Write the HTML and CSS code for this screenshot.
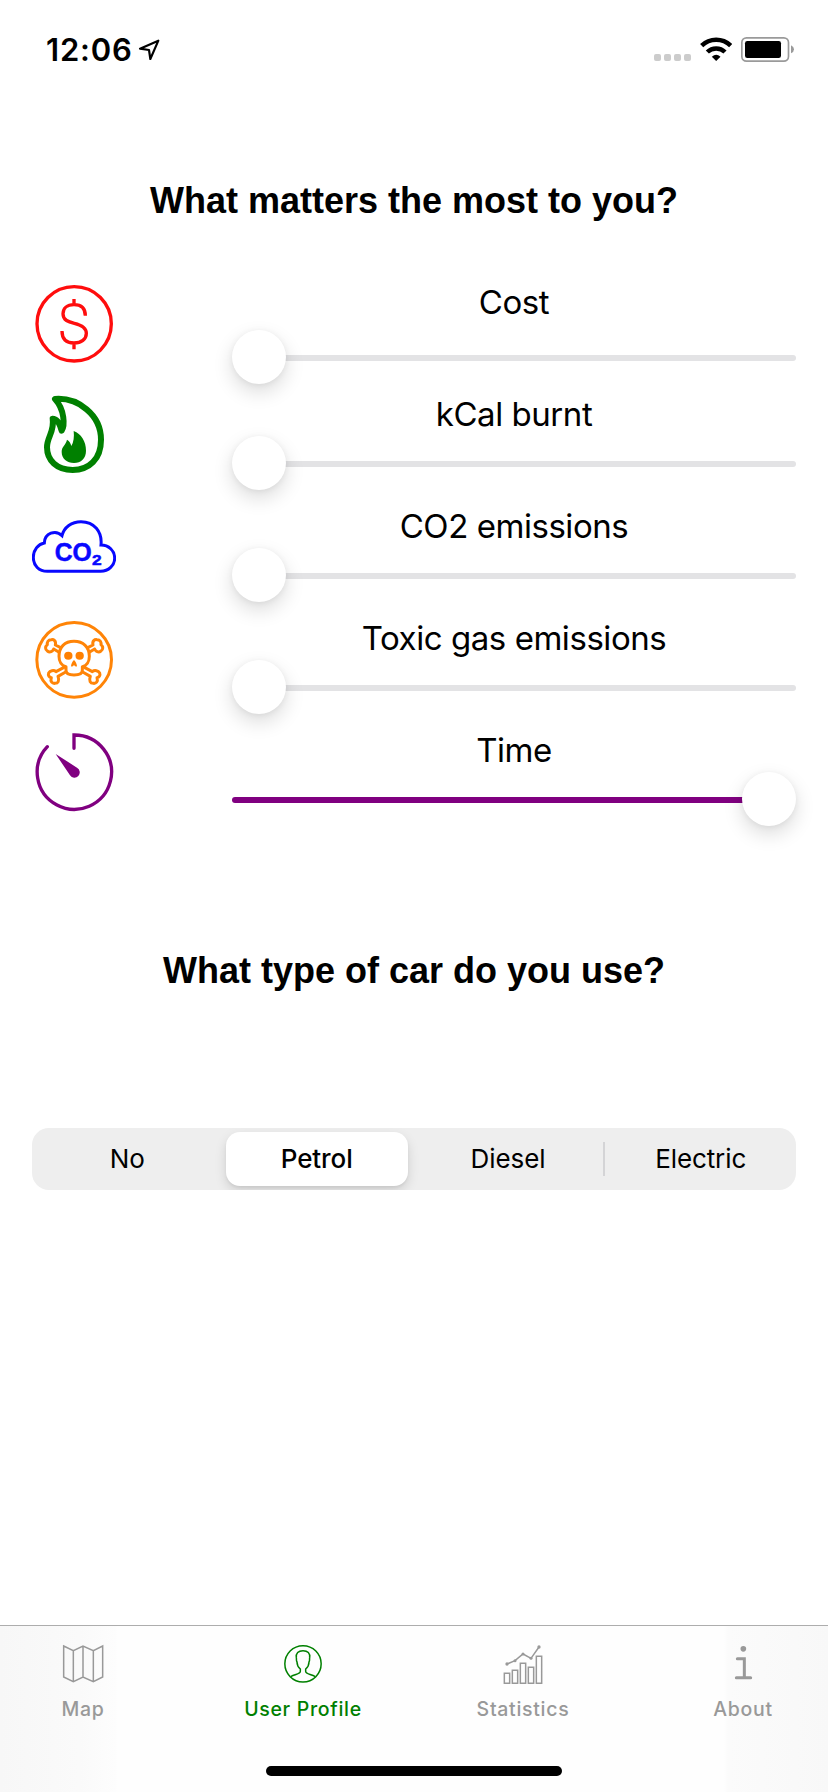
FILE: index.html
```html
<!DOCTYPE html>
<html lang="en">
<head>
<meta charset="utf-8">
<title>User Profile</title>
<link rel="stylesheet" href="styles.css">
</head>
<body>
<div class="screen">
  <header class="status">
    <span class="clock">12:06</span>
    <svg class="location" viewBox="354 54 66 69"><path d="M415 62 L360 86 L387 90 L391 117 Z" fill="none" stroke="#000" stroke-width="6.500" stroke-linejoin="round"/></svg>
    <span class="signal"><i></i><i></i><i></i><i></i></span>
    <svg class="wifi" viewBox="178 51 96 75">
      <g fill="none" stroke="#000" stroke-width="13.500"><path d="M183 77 A62 62 0 0 1 270 77"/><path d="M200 96 A38 38 0 0 1 253 96"/></g>
      <path d="M226.500 123 L213.500 110 Q226.500 98 239.500 110 Z"/>
    </svg>
    <svg class="battery" viewBox="303 51 159 75"><rect x="305.500" y="53.500" width="140" height="70" rx="14" fill="none" stroke="#9a9a9a" stroke-width="5"/><rect x="315" y="63" width="108" height="51" rx="7"/><path d="M453 76 Q462 80 462 88 Q462 96 453 100 Z" fill="#9a9a9a"/></svg>
  </header>

  <main class="content">
    <h1 class="heading">What matters the most to you?</h1>
    <section class="sliders">
      <div class="row row-first">
        <svg class="icon" viewBox="36 36 252 252"><g fill="none" stroke="#ff0d0d" stroke-width="10"><circle cx="162.500" cy="161.500" r="111.500"/><path d="M196 137 C196 114 183 104 162 104 C141 104 129 115 129 131 C129 151 146 156 163 160 C184 165 199 172 199 190 C199 208 184 219 162 219 C139 219 126 207 126 183 M162 87 V105 M162 218 V238"/></g></svg>
        <div class="control"><span class="label">Cost</span><div class="slider"><div class="track"></div><div class="thumb"></div></div></div>
      </div>
      <div class="row">
        <svg class="icon" viewBox="36 372 252 252"><path d="M105 387 C174 382 243 434 243 509 C243 568 207 600 158 600 C110 600 81 571 81 532 C81 500 104 486 98 446 C112 446 119 459 125 482 C135 466 134 419 105 387 Z" fill="none" stroke="#008000" stroke-width="18" stroke-linejoin="round"/><path d="M161 483 C184 492 198 514 198 542 C198 565 183 579 162 579 C141 579 125 566 125 546 C125 529 137 526 141 509 C149 514 152 520 154 528 C161 517 163 500 161 483 Z" fill="#008000"/></svg>
        <div class="control"><span class="label">kCal burnt</span><div class="slider"><div class="track"></div><div class="thumb"></div></div></div>
      </div>
      <div class="row">
        <svg class="icon" viewBox="36 18 252 252"><path d="M82 214 H242 C266 214 284 196 284 175 C284 152 266 135 243 135 C247 94 222 65 183 65 C155 65 132 82 126 107 C107 88 74 99 73 129 C54 132 40 151 40 172 C40 197 57 214 82 214 Z" fill="none" stroke="#0808ff" stroke-width="9"/><text class="gas" x="104" y="183" font-size="76" textLength="111" lengthAdjust="spacingAndGlyphs">CO</text><text class="gas" x="216" y="194" font-size="46" textLength="29" lengthAdjust="spacingAndGlyphs">2</text></svg>
        <div class="control"><span class="label">CO2 emissions</span><div class="slider"><div class="track"></div><div class="thumb"></div></div></div>
      </div>
      <div class="row">
        <svg class="icon" viewBox="36 354 252 252">
          <g fill="none" stroke="#ff8407" stroke-width="9" stroke-linejoin="round" stroke-linecap="round"><circle cx="162.500" cy="479.500" r="112" stroke-width="9"/>
          <path d="M138 500 C125 498 117 485 117 469 C117 441 134 424 162 424 C190 424 208 441 208 469 C208 485 200 498 187 500 V511 C187 521 179 525 162 525 C146 525 138 521 138 511 Z"/>
          <path d="M122 443 L106 435 C109 422 101 418 94 419 C84 419 81 427 82 434 C75 440 75 449 82 453 C90 459 98 454 101 447 L116 456"/>
          <path d="M203 443 L219 435 C216 422 224 418 231 419 C241 419 244 427 243 434 C250 440 250 449 243 453 C235 459 227 454 224 447 L209 456"/>
          <path d="M132 502 L108 515 C101 509 90 512 86 519 C83 527 88 532 94 533 C90 545 97 551 105 550 C114 550 119 543 114 529 L137 516"/>
          <path d="M193 502 L217 515 C224 509 235 512 239 519 C242 527 237 532 231 533 C235 545 228 551 220 550 C211 550 206 543 211 529 L188 516"/></g>
          <g fill="#ff8000"><ellipse cx="145" cy="467" rx="12.500" ry="12"/><ellipse cx="179" cy="467" rx="12.500" ry="12"/><path d="M162 480 C167 484 171 493 171 499 Q166 501 162 495 Q158 501 153 499 C153 493 157 484 162 480 Z"/></g>
        </svg>
        <div class="control"><span class="label">Toxic gas emissions</span><div class="slider"><div class="track"></div><div class="thumb"></div></div></div>
      </div>
      <div class="row">
        <svg class="icon" viewBox="36 690 252 252"><path d="M162 745 V705 A111.500 111.500 0 1 1 82 740" fill="none" stroke="#800080" stroke-width="10" stroke-linecap="round"/><path d="M107 762 L171 803 A16 16 0 1 1 150 826 Z" fill="#800080"/></svg>
        <div class="control"><span class="label">Time</span><div class="slider slider-full"><div class="track"></div><div class="thumb"></div></div></div>
      </div>
    </section>

    <h1 class="heading heading-car">What type of car do you use?</h1>
    <div class="segments">
      <span class="segment">No</span>
      <span class="segment selected">Petrol</span>
      <span class="segment">Diesel</span>
      <span class="divider"></span>
      <span class="segment">Electric</span>
    </div>
  </main>

  <footer class="tabbar">
    <nav class="tabs">
      <div class="tab"><svg class="tab-icon" viewBox="186 102 126 120"><path d="M191 108 L220 122 L249 108 L280 122 L308 108 V201 L280 215 L249 201 L220 215 L191 201 Z M220 122 V215 M249 108 V201 M280 122 V215" fill="none" stroke="#999" stroke-width="4.500"/></svg><span>Map</span></div>
      <div class="tab active"><svg class="tab-icon" viewBox="846 102 126 120"><g fill="none" stroke="#008000" stroke-width="4.500"><circle cx="909" cy="161.500" r="54.500"/><path d="M872 200 C886 192 901 193 901 184 V177 C894 171 891 162 891 156 C888 151 890 147 889 143 C887 129 895 122 909 122 C923 122 931 129 929 143 C928 147 930 151 927 156 C927 162 924 171 917 177 V184 C917 193 932 192 946 200"/></g></svg><span>User Profile</span></div>
      <div class="tab"><svg class="tab-icon" viewBox="264 102 126 120"><g fill="none" stroke="#999" stroke-width="4.500"><path d="M271 190 H287 V220 H271 Z M295 181 H311 V220 H295 Z M319 160 H335 V220 H319 Z M343 172 H359 V220 H343 Z M367 139 H383 V220 H367 Z M279 162 L303 152 L327 132 L351 145 L375 111"/></g><g fill="#999"><circle cx="279" cy="162" r="5"/><circle cx="303" cy="152" r="4.500"/><circle cx="327" cy="132" r="4.500"/><circle cx="351" cy="145" r="4.500"/><circle cx="375" cy="111" r="5"/></g></svg><span>Statistics</span></div>
      <div class="tab"><svg class="tab-icon" viewBox="924 102 126 120"><circle cx="988" cy="116.500" r="8.500" fill="#999"/><path d="M970 146 H991 V203 M967 203 H1010" fill="none" stroke="#999" stroke-width="9" stroke-linecap="round"/></svg><span>About</span></div>
    </nav>
    <div class="home"></div>
  </footer>
</div>
</body>
</html>
```
FILE: styles.css
```css
body {
  margin: 0;
  background: #fff;
  color: #000;
  font-family: Inter, "Liberation Sans", sans-serif;
}
.screen {
  width: 828px;
  height: 1792px;
  display: flex;
  flex-direction: column;
  overflow: hidden;
}
.status {
  box-sizing: border-box;
  height: 100px;
  padding: 30px 34px 0 46px;
  display: flex;
  align-items: flex-start;
}
.clock {
  width: 92px;
  font-size: 31px;
  font-weight: 600;
  line-height: 40px;
  letter-spacing: 0.8px;
  white-space: nowrap;
}
.location { width: 22px; height: 23px; margin-top: 8px; }
.signal { display: flex; gap: 3px; margin: 24px 9px 0 auto; }
.signal i { width: 7px; height: 7px; border-radius: 2px; background: #ccc; }
.wifi { width: 32px; height: 25px; margin: 7px 9px 0 0; }
.battery { width: 53px; height: 25px; margin-top: 7px; }
.content { flex: 1; padding: 0 32px; }
.heading {
  margin: 80px 0 0;
  font: bold 36px/42px "Liberation Sans", sans-serif;
  text-align: center;
}
.sliders { margin-top: 46px; }
.row {
  height: 112px;
  display: grid;
  grid-template-columns: 200px 1fr;
}
.icon { width: 84px; height: 84px; margin-top: 14px; }
.gas {
  font-family: "Liberation Sans", sans-serif;
  font-weight: bold;
  fill: #0808ff;
  stroke: #0808ff;
  stroke-width: 1.5px;
}
.control { display: flex; flex-direction: column; padding-top: 14px; }
.label {
  font-size: 33px;
  line-height: 40px;
  letter-spacing: -0.45px;
  text-align: center;
}
.slider {
  display: flex;
  align-items: center;
  height: 54px;
  margin-top: 2px;
}
.row-first .slider { margin-top: 8px; }
.thumb {
  order: -1;
  flex: none;
  width: 54px;
  height: 54px;
  border-radius: 50%;
  background: #fff;
  box-shadow: 0 8px 20px rgba(0, 0, 0, 0.14), 0 1px 6px rgba(0, 0, 0, 0.06);
  z-index: 1;
}
.track {
  flex: 1;
  height: 6px;
  margin: 2px 0 0 -4px;
  border-radius: 3px;
  background: #e3e3e5;
}
.slider-full .thumb { order: 1; }
.slider-full .track { margin: 2px -4px 0 0; background: #800080; }
.heading-car { margin-top: 122px; }
.segments {
  height: 62px;
  margin-top: 136px;
  display: flex;
  align-items: center;
  border-radius: 17px;
  background: #eee;
  overflow: hidden;
}
.segment {
  flex: 1 1 0;
  font-size: 26px;
  line-height: 54px;
  text-align: center;
  letter-spacing: -0.1px;
}
.selected {
  flex: 0 0 182px;
  margin: 0 5px 0 3px;
  border-radius: 14px;
  background: #fff;
  font-weight: 500;
  box-shadow: 0 5px 12px rgba(0, 0, 0, 0.13), 0 2px 3px rgba(0, 0, 0, 0.05);
}
.divider { width: 2px; height: 34px; background: #d4d4d6; }
.tabbar {
  box-sizing: border-box;
  height: 167px;
  padding-top: 18px;
  border-top: 1px solid #adadad;
  background: linear-gradient(90deg, #f7f7f7 0, #fafafa 80px, #fdfdfd 116px, #fefefe 117px, #fefefe 724px, #fbfbfb 728px, #f8f8f8 828px);
}
.tabs { display: flex; gap: 68px; padding: 0 7px; }
.tab {
  width: 152px;
  display: flex;
  flex-direction: column;
  align-items: center;
  color: #999;
  font-size: 19.5px;
  font-weight: 450;
  line-height: 24px;
  letter-spacing: 0.7px;
  white-space: nowrap;
}
.tab-icon { width: 42px; height: 40px; margin-bottom: 13px; }
.active { color: #008000; }
.home { width: 296px; height: 10px; margin: 45px auto 0; border-radius: 5px; background: #000; }
```
